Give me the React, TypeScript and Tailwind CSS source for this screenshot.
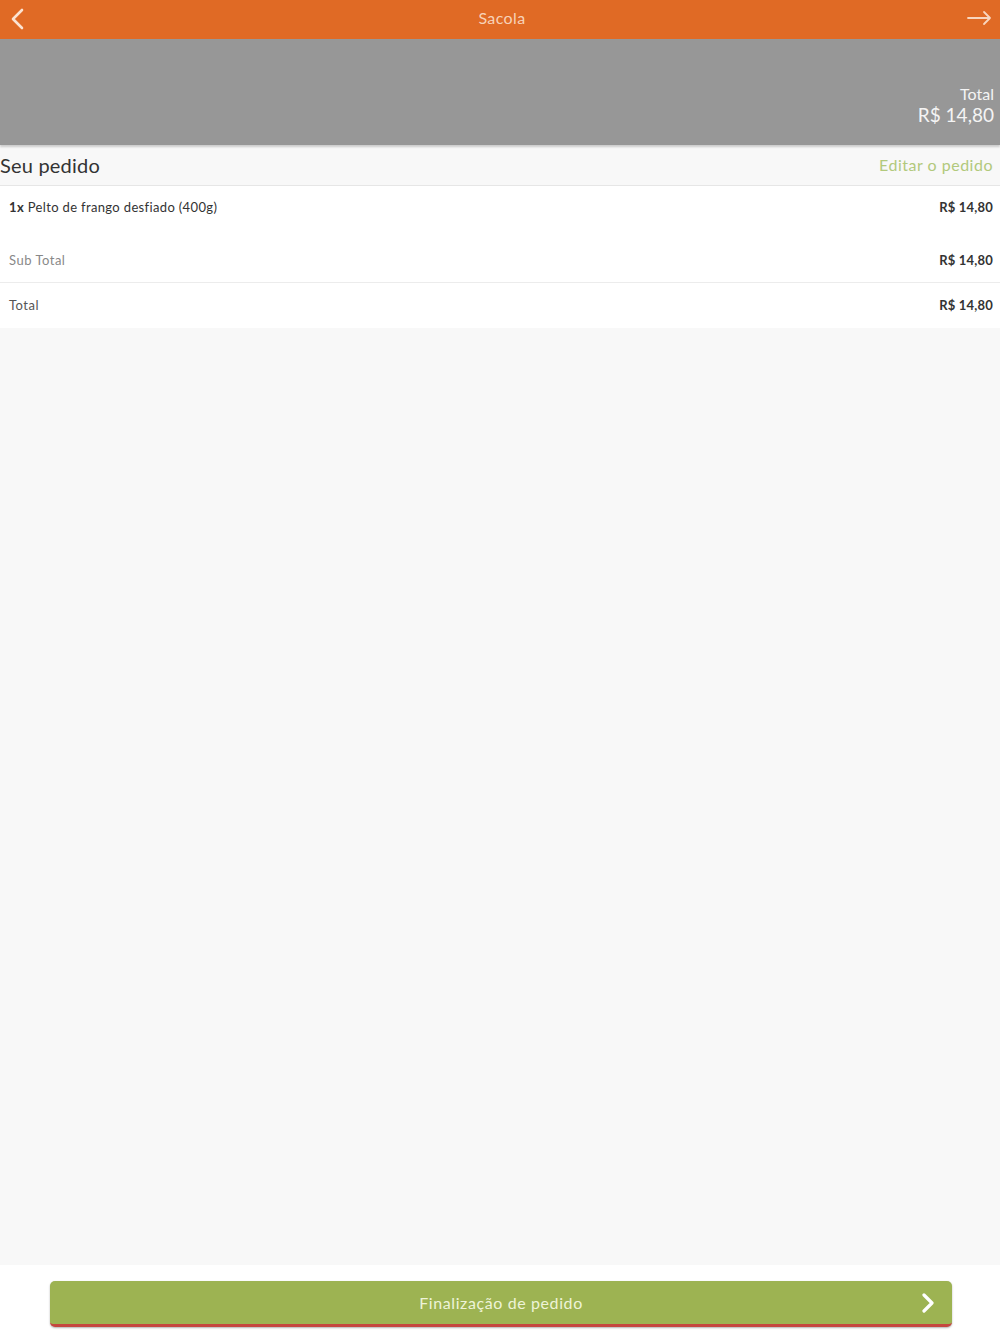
import React from "react";

export default function App() {
  return (
    <div className="w-[1000px] h-[1334px] flex flex-col bg-white" style={{ fontFamily: "Lato, 'Open Sans', sans-serif" }}>
      <div className="h-[39px] bg-[#e06a25] grid grid-cols-[1fr_auto_1fr] items-center px-[8px] shrink-0">
        <svg width="16" height="22" viewBox="0 0 16 22" fill="none" className="ml-[1px] mb-[2px]">
          <path d="M13 2 L4 11 L13 20" stroke="#fbe3d2" strokeWidth="2.6" strokeLinecap="round" strokeLinejoin="round" />
        </svg>
        <div className="text-[16px] tracking-[0.4px] text-[#f7d2b8] ml-[4px] mb-[4px]">Sacola</div>
        <div className="flex justify-end">
          <svg width="28" height="18" viewBox="0 0 28 18" fill="none" className="mr-[-2px] mb-[4px]">
            <path d="M2 9 H24 M18 3 L24 9 L18 15" stroke="#f8d6bf" strokeWidth="1.8" strokeLinecap="round" strokeLinejoin="round" />
          </svg>
        </div>
      </div>
      <div className="h-[106px] bg-[#979797] flex flex-col items-end justify-end pr-[6px] pb-[19px] shrink-0 shadow-[0_2px_2px_rgba(0,0,0,0.18)] relative z-10">
        <div className="text-[16px] leading-[20px] text-[#f4f4f4]">Total</div>
        <div className="text-[19px] leading-[22px] text-[#f4f4f4]">R$ 14,80</div>
      </div>
      <div className="h-[41px] bg-[#f8f8f8] flex items-center justify-between pr-[7px] border-b border-[#e6e6e6] shrink-0">
        <div className="text-[20px] tracking-[0.2px] text-[#333]">Seu pedido</div>
        <div className="text-[16px] tracking-[0.5px] text-[#b2c97c]">Editar o pedido</div>
      </div>
      <div className="bg-white shrink-0">
        <div className="flex justify-between items-start px-[9px] pr-[7px] pt-[12px] h-[54px]">
          <div className="text-[13px] tracking-[0.35px] text-[#333]"><span className="font-bold">1x</span> Pelto de frango desfiado (400g)</div>
          <div className="text-[13px] tracking-[0.2px] font-bold text-[#333]">R$ 14,80</div>
        </div>
        <div className="flex justify-between items-center px-[9px] pr-[7px] h-[43px] border-b border-[#ececec]">
          <div className="text-[13px] tracking-[0.5px] text-[#888]">Sub Total</div>
          <div className="text-[13px] tracking-[0.2px] font-bold text-[#333]">R$ 14,80</div>
        </div>
        <div className="flex justify-between items-center px-[9px] pr-[7px] h-[45px]">
          <div className="text-[13px] tracking-[0.5px] text-[#555]">Total</div>
          <div className="text-[13px] tracking-[0.2px] font-bold text-[#333]">R$ 14,80</div>
        </div>
      </div>
      <div className="flex-1 bg-[#f8f8f8]" />
      <div className="h-[69px] bg-white shrink-0 flex items-start justify-center pt-[16px]">
        <div className="w-[902px] h-[46px] ml-[2px] rounded-[5px] bg-[#9db352] border-b-[3px] border-[#c5473f] shadow-[0_1px_2px_rgba(0,0,0,0.3)] relative flex items-center justify-center">
          <div className="text-[16px] tracking-[0.6px] text-[#eef3d8]">Finalização de pedido</div>
          <svg width="14" height="20" viewBox="0 0 14 20" fill="none" className="absolute right-[17px] top-[12px]">
            <path d="M3 2 L11 10 L3 18" stroke="#ffffff" strokeWidth="3.2" strokeLinecap="round" strokeLinejoin="round" />
          </svg>
        </div>
      </div>
    </div>
  );
}
